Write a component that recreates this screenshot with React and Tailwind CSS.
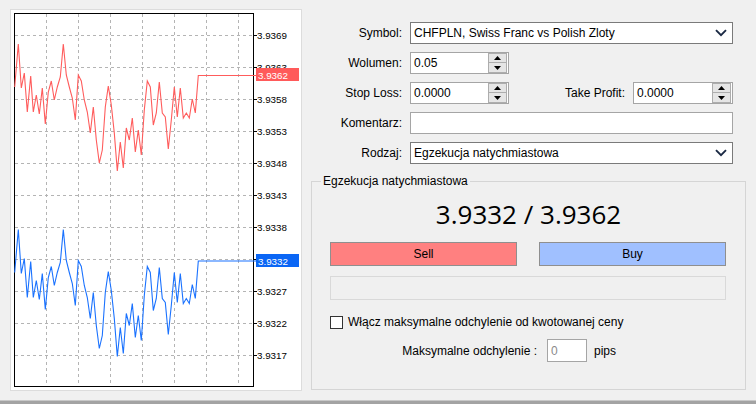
import React from "react";

// price path sampled from the chart, one point every ~3px
const redPts = [
  [14.7, 87], [18.3, 44], [21.3, 88], [24.3, 73], [27.3, 112], [30.7, 76], [33.3, 112], [36.3, 95],
  [39.3, 114], [42.3, 88], [45.3, 124], [48.3, 92], [51.3, 81], [54.3, 100], [57.3, 87], [60.3, 77],
  [63.3, 44], [66.3, 75], [69.3, 87], [72.3, 98], [75.3, 120], [78.3, 75], [81.3, 81], [84.3, 100],
  [87.3, 112], [90.3, 133], [93.3, 107], [96.3, 140], [99.3, 163], [102.3, 150], [105.3, 107],
  [108.3, 86], [111.3, 105], [114.3, 133], [117.3, 171], [120.3, 142], [123.3, 168], [126.3, 128],
  [129.3, 140], [132.3, 118], [135.3, 152], [138.3, 130], [141.3, 155], [144.3, 110], [147.3, 81],
  [150.3, 87], [153.3, 125], [156.3, 113], [159.3, 82], [162.3, 113], [165.3, 117], [168.3, 149],
  [171.3, 120], [174.3, 87], [177.3, 117], [180.3, 88], [183.3, 118], [186.3, 113], [189.3, 118],
  [192.3, 99], [195.3, 113], [198.3, 75.5], [256, 75.5],
];
const bluePts = redPts.map(([x, y]) => [x, y + 185.5]);
const toPath = (pts) => pts.map(([x, y], i) => (i ? "L" : "M") + x + " " + y).join(" ");

const gridX = [46, 78, 110, 142, 174, 206, 238];
// the 3.9363 / 3.9332 levels sit under the price tags
const levels = [
  [35, "3.9369"], [67, "3.9363"], [99, "3.9358"], [131, "3.9353"], [163, "3.9348"], [195, "3.9343"],
  [227, "3.9338"], [259, null], [291, "3.9327"], [323, "3.9322"], [355, "3.9317"],
];

const font = { fontFamily: "'Liberation Sans', Arial, sans-serif" };

function Chart() {
  return (
    <div className="ml-[10px] mt-[9px] h-[382px] w-[292px] border border-[#dcdcdc] bg-white">
      <svg width="290" height="380" viewBox="11 10 290 380" className="block">
        <defs>
          <clipPath id="above-tag">
            <rect x="250" y="55" width="60" height="13" />
          </clipPath>
        </defs>
        {gridX.map((x) => (
          <line key={x} x1={x + 0.5} y1="14" x2={x + 0.5} y2="386" stroke="#b4b4b4" strokeDasharray="3 3" />
        ))}
        {levels.map(([y]) => (
          <line key={y} x1="15" y1={y + 0.5} x2="253" y2={y + 0.5} stroke="#b4b4b4" strokeDasharray="3 3" />
        ))}
        <rect x="14.5" y="13.5" width="239" height="373" fill="none" stroke="#000" />
        {levels.map(([y, label]) => (
          <g key={y}>
            <line x1="253" y1={y + 0.5} x2="257" y2={y + 0.5} stroke="#000" />
            {label && (
              <text
                x="257"
                y={y + 4}
                fontSize="9.8"
                fill="#000"
                style={font}
                clipPath={y === 67 ? "url(#above-tag)" : undefined}
              >
                {label}
              </text>
            )}
          </g>
        ))}
        <path d={toPath(redPts)} fill="none" stroke="#ff5c5c" strokeWidth="1.1" />
        <path d={toPath(bluePts)} fill="none" stroke="#1a72ff" strokeWidth="1.1" />
        <rect x="256" y="68" width="43" height="13" fill="#ff5a5a" />
        <text x="258" y="78.5" fontSize="9.8" fill="#fff" style={font}>3.9362</text>
        <rect x="256" y="254" width="43" height="13" fill="#0a66f5" />
        <text x="258" y="264.5" fontSize="9.8" fill="#fff" style={font}>3.9332</text>
      </svg>
    </div>
  );
}

function Arrow({ up }) {
  return (
    <svg width="7" height="4" viewBox="0 0 7 4">
      <path d={up ? "M0 4 L3.5 0 L7 4 Z" : "M0 0 L3.5 4 L7 0 Z"} fill="#000" />
    </svg>
  );
}

function Spin({ value, w }) {
  return (
    <div className={"flex h-[22px] items-center border border-[#a5a5a5] bg-white " + w}>
      <span className="flex-1 pl-[3px]">{value}</span>
      <div className="mr-[1px] flex h-[20px] w-[19px] flex-col">
        <div className="flex h-[10px] items-center justify-center border border-[#adadad] bg-[#e5e5e5]">
          <Arrow up />
        </div>
        <div className="flex h-[10px] items-center justify-center border border-t-0 border-[#adadad] bg-[#e5e5e5]">
          <Arrow />
        </div>
      </div>
    </div>
  );
}

function Chevron() {
  return (
    <svg width="12" height="8" viewBox="0 0 12 8" className="mr-[5px]">
      <path d="M1 1.2 L6 6.2 L11 1.2" fill="none" stroke="#1b2a44" strokeWidth="1.9" />
    </svg>
  );
}

function Row({ label, children }) {
  return (
    <div className="flex h-[22px] items-center">
      <span className="w-[91px] text-right">{label}</span>
      <div className="ml-[8px] flex flex-1 items-center">{children}</div>
    </div>
  );
}

export default function App() {
  return (
    <div className="flex h-[404px] w-[756px] flex-col overflow-hidden bg-[#f0f0f0] text-[12px] text-black" style={font}>
      <div className="flex flex-1">
        <Chart />
        <div className="ml-[9px] flex w-[435px] flex-col pt-[22px]">
          <div className="flex flex-col gap-[8px] pr-[13px]">
            <Row label="Symbol:">
              <div className="flex h-[22px] flex-1 items-center justify-between border border-[#7a7a7a] bg-white pl-[3px]">
                <span>CHFPLN, Swiss Franc vs Polish Zloty</span>
                <Chevron />
              </div>
            </Row>
            <Row label="Wolumen:">
              <Spin value="0.05" w="w-[99px]" />
            </Row>
            <Row label="Stop Loss:">
              <Spin value="0.0000" w="w-[99px]" />
              <span className="ml-auto">Take Profit:</span>
              <div className="ml-[8px]">
                <Spin value="0.0000" w="w-[100px]" />
              </div>
            </Row>
            <Row label="Komentarz:">
              <div className="h-[22px] flex-1 border border-[#a5a5a5] bg-white" />
            </Row>
            <Row label="Rodzaj:">
              <div className="flex h-[22px] flex-1 items-center justify-between border border-[#7a7a7a] bg-white pl-[3px]">
                <span>Egzekucja natychmiastowa</span>
                <Chevron />
              </div>
            </Row>
          </div>

          <fieldset className="mt-[10px] h-[216px] border border-[#d5d5d5]">
            <legend className="ml-[9px] px-[2px] leading-[14px]">Egzekucja natychmiastowa</legend>
            <div className="flex flex-col px-[18px]">
              <div className="mt-[11px] text-center text-[26px] leading-[30px]" style={{ fontFamily: "'Open Sans', 'Noto Sans', sans-serif" }}>
                3.9332 / 3.9362
              </div>
              <div className="mt-[13px] flex gap-[22px] pr-[1px]">
                <button className="h-[24px] flex-1 border border-[#8f8f8f] bg-[#ff8080]">Sell</button>
                <button className="h-[24px] flex-1 border border-[#8f8f8f] bg-[#a0c0ff]">Buy</button>
              </div>
              <div className="mt-[10px] mr-[1px] h-[24px] border border-[#d9d9d9]" />
              <div className="mt-[13px] flex items-center">
                <span className="h-[13px] w-[13px] border border-[#333] bg-white" />
                <span className="ml-[5px]">Włącz maksymalne odchylenie od kwotowanej ceny</span>
              </div>
              <div className="mt-[8px] flex items-center">
                <span className="w-[207px] text-right">Maksymalne odchylenie :</span>
                <div className="ml-[10px] flex h-[23px] w-[40px] items-center border border-[#a5a5a5] bg-white pl-[3px] text-[#8a8a8a]">0</div>
                <span className="ml-[7px]">pips</span>
              </div>
            </div>
          </fieldset>
        </div>
      </div>
      <div className="h-[4px] border-t border-[#c8c8c8] bg-[#a3a3a3]" />
    </div>
  );
}
